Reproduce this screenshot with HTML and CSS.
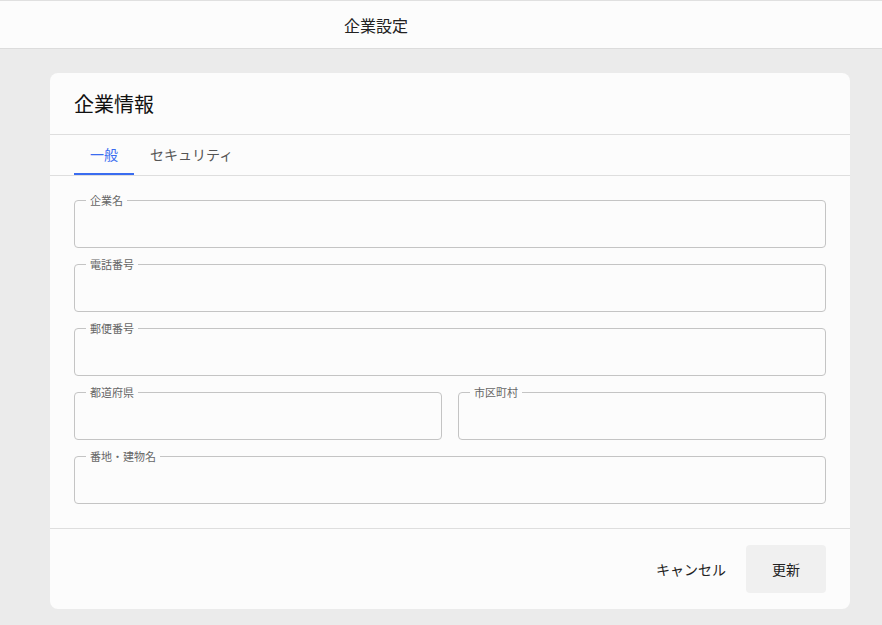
FILE: index.html
```html
<!DOCTYPE html>
<html lang="ja">
<head>
    <meta charset="UTF-8">
    <meta name="viewport" content="width=device-width, initial-scale=1.0">
    <title>企業設定</title>
    <link rel="stylesheet" href="styles.css">
</head>
<body>

<header class="topbar">
    <span class="topbar-title">企業設定</span>
</header>

<main class="page">
    <section class="card">
        <div class="card-header">
            <h2>企業情報</h2>
        </div>

        <nav class="tabs">
            <span class="tab active">一般</span>
            <span class="tab">セキュリティ</span>
        </nav>

        <form class="form">
            <div class="field">
                <label>企業名</label>
                <input type="text">
            </div>
            <div class="field">
                <label>電話番号</label>
                <input type="text">
            </div>
            <div class="field">
                <label>郵便番号</label>
                <input type="text">
            </div>
            <div class="row">
                <div class="field">
                    <label>都道府県</label>
                    <input type="text">
                </div>
                <div class="field">
                    <label>市区町村</label>
                    <input type="text">
                </div>
            </div>
            <div class="field">
                <label>番地・建物名</label>
                <input type="text">
            </div>
        </form>

        <div class="card-footer">
            <button type="button" class="btn btn-text">キャンセル</button>
            <button type="button" class="btn btn-filled">更新</button>
        </div>
    </section>
</main>

</body>
</html>
```

FILE: styles.css
```css
* {
    box-sizing: border-box;
}
body {
    margin: 0;
    background: #ebebeb;
    font-family: "Noto Sans CJK JP", "Noto Sans", sans-serif;
    color: #222;
}
.topbar {
    height: 49px;
    background: #fcfcfc;
    border-top: 1px solid #e0e0e0;
    border-bottom: 1px solid #dcdcdc;
    display: flex;
    align-items: center;
    padding-left: 344px;
}
.topbar-title {
    font-size: 16px;
}
.page {
    padding: 24px 32px 16px 50px;
}
.card {
    width: 800px;
    background: #fcfcfc;
    border-radius: 8px;
}
.card-header {
    padding: 17px 24px 16px;
    border-bottom: 1px solid #dedede;
}
.card-header h2 {
    margin: 0;
    font-size: 20px;
    font-weight: 400;
    line-height: 28px;
    color: #111;
}
.tabs {
    display: flex;
    padding: 0 24px;
    border-bottom: 1px solid #dedede;
}
.tab {
    height: 40px;
    padding: 0 16px;
    display: flex;
    align-items: center;
    font-size: 14px;
    color: #555;
    border-bottom: 2px solid transparent;
}
.tab.active {
    color: #3a6cf0;
    border-bottom-color: #3a6cf0;
}
.form {
    padding: 24px;
    display: flex;
    flex-direction: column;
    gap: 16px;
    border-bottom: 1px solid #dedede;
}
.row {
    display: flex;
    gap: 16px;
}
.row .field {
    flex: 1;
}
.field {
    position: relative;
    height: 48px;
    border: 1px solid #c4c4c4;
    border-radius: 4px;
}
.field label {
    position: absolute;
    top: -8px;
    left: 11px;
    padding: 0 4px;
    background: #fcfcfc;
    font-size: 11px;
    line-height: 14px;
    color: #666;
}
.field input {
    width: 100%;
    height: 100%;
    border: none;
    background: transparent;
    outline: none;
    padding: 0 16px;
    font: inherit;
    font-size: 14px;
}
.card-footer {
    display: flex;
    justify-content: flex-end;
    gap: 4px;
    padding: 16px 24px;
}
.btn {
    height: 48px;
    border: none;
    border-radius: 4px;
    font-family: inherit;
    font-size: 14px;
    color: #222;
    cursor: pointer;
}
.btn-text {
    background: transparent;
    padding: 0 16px;
}
.btn-filled {
    background: #f0f0f0;
    min-width: 80px;
    padding: 0 24px;
}
```
